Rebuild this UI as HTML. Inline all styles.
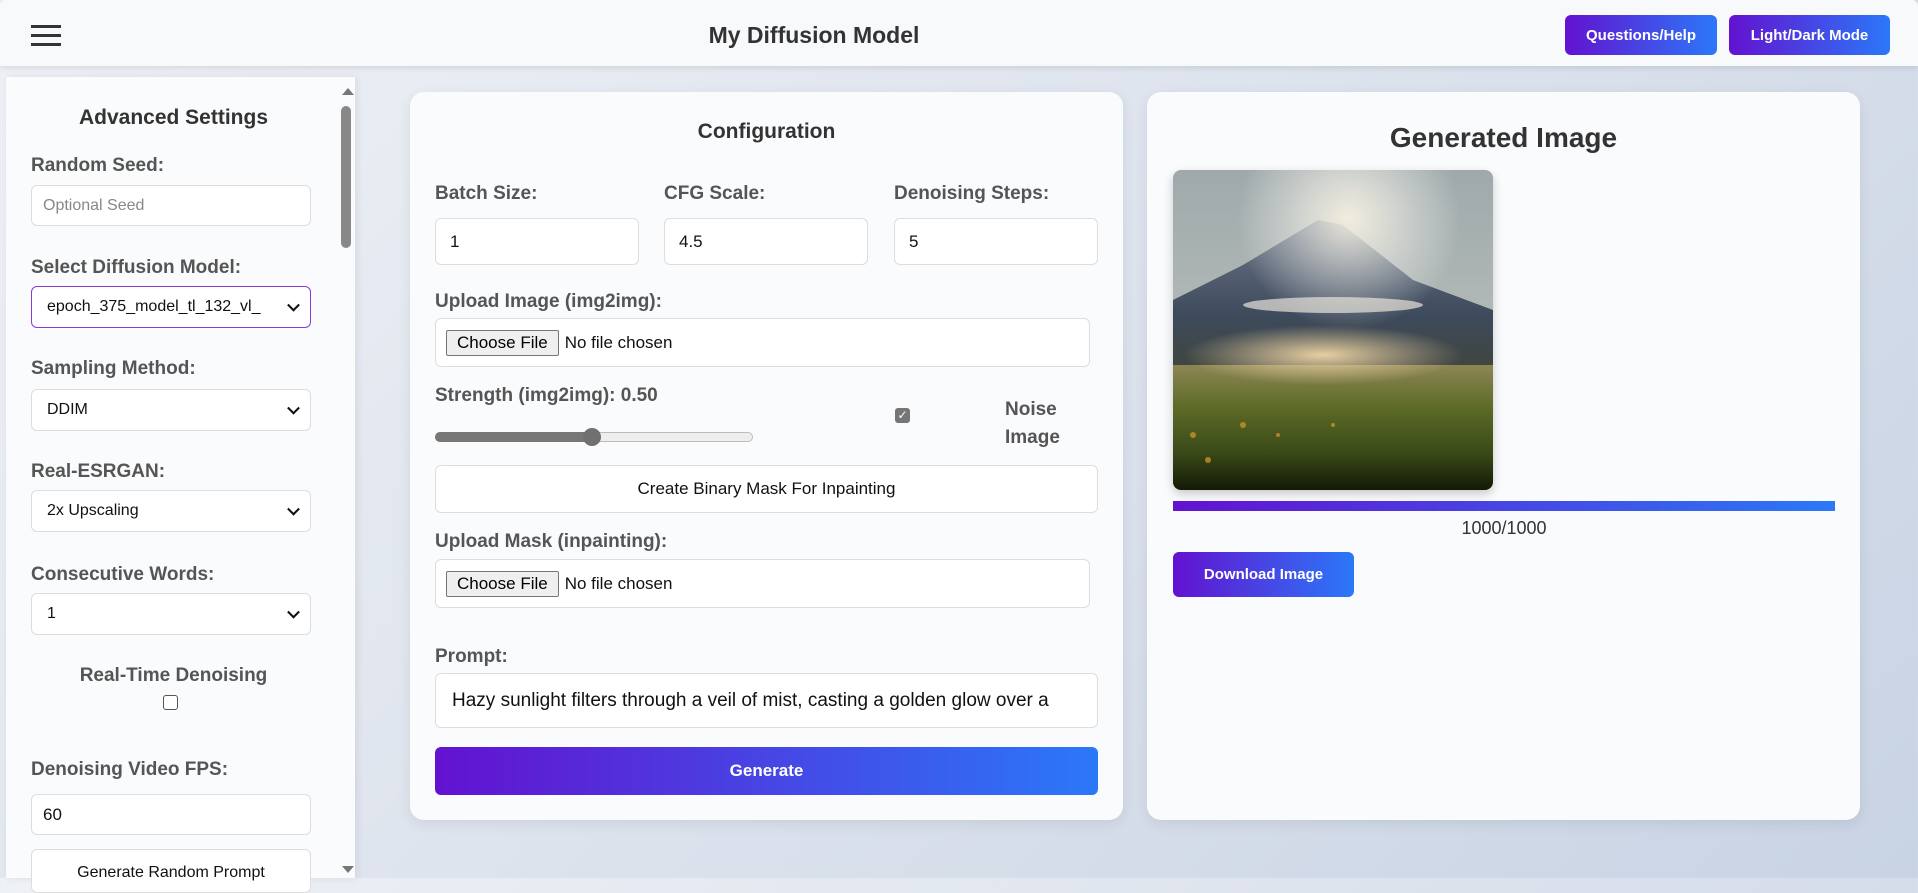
<!DOCTYPE html>
<html><head><meta charset="utf-8"><style>
*{box-sizing:border-box;margin:0;padding:0}
body{width:1918px;height:878px;overflow:hidden;font-family:"Liberation Sans","DejaVu Sans",sans-serif;background:linear-gradient(135deg,#eef1f6 0%,#dde3ed 50%,#c8d3e4 100%);position:relative}
.abs{position:absolute}
.header{left:0;top:0;width:1918px;height:66px;background:#f8f9fb;box-shadow:0 2px 6px rgba(0,0,0,.1);border-radius:6px 6px 0 0}
.ham{left:31px;width:30px;height:3px;background:#333}
.grad{background:linear-gradient(90deg,#6312cf,#2b78f8);color:#fff;font-weight:bold;border-radius:6px;display:flex;align-items:center;justify-content:center}
.side{left:6px;top:77px;width:349px;height:801px;background:#fafbfc;box-shadow:2px 0 8px rgba(0,0,0,.08)}
.lbl{font-size:19px;color:#555;font-weight:600}
.inp{background:#fff;border:1px solid #ddd;border-radius:6px;font-size:17px;color:#111;display:flex;align-items:center;padding-left:14px}
.card{background:#fafbfd;border-radius:14px;box-shadow:0 4px 14px rgba(0,0,0,.08)}
.sel::after{content:"";position:absolute;right:12px;top:50%;width:7px;height:7px;border-right:2px solid #111;border-bottom:2px solid #111;transform:translateY(-70%) rotate(45deg)}
.fbtn{background:#efefef;border:1px solid #767676;border-radius:2px;font-size:17px;padding:2px 10px;margin-right:6px;color:#000}
</style></head><body>
<div class="abs header"></div>
<div class="abs ham" style="top:25px"></div><div class="abs ham" style="top:34px"></div><div class="abs ham" style="top:43px"></div>
<div class="abs" style="left:0;width:1628px;top:22px;text-align:center;font-size:23px;color:#333;font-weight:600">My Diffusion Model</div>
<div class="abs grad" style="left:1565px;top:15px;width:152px;height:40px;font-size:15px">Questions/Help</div>
<div class="abs grad" style="left:1729px;top:15px;width:161px;height:40px;font-size:15px">Light/Dark Mode</div>

<div class="abs side"></div>
<div class="abs" style="left:342px;top:88px;width:0;height:0;border-left:6px solid transparent;border-right:6px solid transparent;border-bottom:7px solid #777"></div>
<div class="abs" style="left:341px;top:106px;width:10px;height:142px;background:#888;border-radius:5px"></div>
<div class="abs" style="left:342px;top:866px;width:0;height:0;border-left:6px solid transparent;border-right:6px solid transparent;border-top:7px solid #777"></div>
<div class="abs" style="left:6px;width:335px;top:106px;text-align:center;font-size:21px;font-weight:bold;color:#333">Advanced Settings</div>
<div class="abs lbl" style="left:31px;top:155px">Random Seed:</div>
<div class="abs inp" style="left:31px;top:185px;width:280px;height:41px;color:#888;font-size:16px;padding-left:11px">Optional Seed</div>
<div class="abs lbl" style="left:31px;top:257px">Select Diffusion Model:</div>
<div class="abs inp sel" style="left:31px;top:286px;width:280px;height:42px;border-color:#8a3ad8;padding-left:15px;font-size:16px">epoch_375_model_tl_132_vl_</div>
<div class="abs lbl" style="left:31px;top:358px">Sampling Method:</div>
<div class="abs inp sel" style="left:31px;top:389px;width:280px;height:42px;padding-left:15px;font-size:16px">DDIM</div>
<div class="abs lbl" style="left:31px;top:461px">Real-ESRGAN:</div>
<div class="abs inp sel" style="left:31px;top:490px;width:280px;height:42px;padding-left:15px;font-size:16px">2x Upscaling</div>
<div class="abs lbl" style="left:31px;top:564px">Consecutive Words:</div>
<div class="abs inp sel" style="left:31px;top:593px;width:280px;height:42px;padding-left:15px;font-size:16px">1</div>
<div class="abs lbl" style="left:6px;width:335px;text-align:center;top:665px">Real-Time Denoising</div>
<div class="abs" style="left:163px;top:695px;width:15px;height:15px;border:1px solid #555;border-radius:3px;background:#fff"></div>
<div class="abs lbl" style="left:31px;top:759px">Denoising Video FPS:</div>
<div class="abs inp" style="left:31px;top:794px;width:280px;height:41px;padding-left:11px">60</div>
<div class="abs inp" style="left:31px;top:849px;width:280px;height:44px;justify-content:center;padding:4px 0 0;font-size:16px">Generate Random Prompt</div>

<div class="abs card" style="left:410px;top:92px;width:713px;height:728px"></div>
<div class="abs" style="left:410px;width:713px;top:120px;text-align:center;font-size:21px;font-weight:bold;color:#333">Configuration</div>
<div class="abs lbl" style="left:435px;top:183px">Batch Size:</div>
<div class="abs lbl" style="left:664px;top:183px">CFG Scale:</div>
<div class="abs lbl" style="left:894px;top:183px">Denoising Steps:</div>
<div class="abs inp" style="left:435px;top:218px;width:204px;height:47px">1</div>
<div class="abs inp" style="left:664px;top:218px;width:204px;height:47px">4.5</div>
<div class="abs inp" style="left:894px;top:218px;width:204px;height:47px">5</div>
<div class="abs lbl" style="left:435px;top:291px">Upload Image (img2img):</div>
<div class="abs inp" style="left:435px;top:318px;width:655px;height:49px;padding-left:10px;font-size:17px"><span class="fbtn">Choose File</span>No file chosen</div>
<div class="abs lbl" style="left:435px;top:385px">Strength (img2img): 0.50</div>
<div class="abs" style="left:435px;top:432px;width:318px;height:10px;border-radius:5px;background:#eee;border:1px solid #bbb"></div>
<div class="abs" style="left:435px;top:432px;width:158px;height:10px;border-radius:5px;background:#777"></div>
<div class="abs" style="left:583px;top:428px;width:18px;height:18px;border-radius:50%;background:#707070"></div>
<div class="abs" style="left:895px;top:408px;width:15px;height:15px;border-radius:3px;background:#767676;color:#fff;font-size:12px;line-height:15px;text-align:center">✓</div>
<div class="abs lbl" style="left:1005px;top:396px;line-height:28px">Noise<br>Image</div>
<div class="abs inp" style="left:435px;top:465px;width:663px;height:48px;justify-content:center;padding:0">Create Binary Mask For Inpainting</div>
<div class="abs lbl" style="left:435px;top:531px">Upload Mask (inpainting):</div>
<div class="abs inp" style="left:435px;top:559px;width:655px;height:49px;padding-left:10px"><span class="fbtn">Choose File</span>No file chosen</div>
<div class="abs lbl" style="left:435px;top:646px">Prompt:</div>
<div class="abs inp" style="left:435px;top:673px;width:663px;height:55px;font-size:19px;padding-left:16px;white-space:nowrap;overflow:hidden">Hazy sunlight filters through a veil of mist, casting a golden glow over a</div>
<div class="abs grad" style="left:435px;top:747px;width:663px;height:48px;font-size:17px">Generate</div>

<div class="abs card" style="left:1147px;top:92px;width:713px;height:728px"></div>
<div class="abs" style="left:1147px;width:713px;top:122px;text-align:center;font-size:28px;font-weight:bold;color:#333">Generated Image</div>
<svg class="abs" style="left:1173px;top:170px;border-radius:8px;box-shadow:0 4px 10px rgba(0,0,0,.2)" width="320" height="320" viewBox="0 0 320 320">
<defs>
<linearGradient id="sky" x1="0" y1="0" x2="0" y2="1"><stop offset="0" stop-color="#9fa9ab"/><stop offset="1" stop-color="#c7cbc4"/></linearGradient>
<linearGradient id="gr" x1="0" y1="0" x2="0" y2="1"><stop offset="0" stop-color="#8d8654"/><stop offset=".35" stop-color="#5b6a26"/><stop offset=".7" stop-color="#3a4a18"/><stop offset="1" stop-color="#121a06"/></linearGradient>
<linearGradient id="mt" x1="0" y1="0" x2="0" y2="1"><stop offset="0" stop-color="#6f7a8a"/><stop offset=".6" stop-color="#3d4a5c"/><stop offset="1" stop-color="#404438"/></linearGradient>
<radialGradient id="sun" cx=".55" cy=".15" r=".35"><stop offset="0" stop-color="#fff8e6" stop-opacity=".85"/><stop offset="1" stop-color="#fff" stop-opacity="0"/></radialGradient>
<radialGradient id="mist" cx=".5" cy=".5" r=".5"><stop offset="0" stop-color="#f0d6a6" stop-opacity=".95"/><stop offset="1" stop-color="#e8cfa2" stop-opacity="0"/></radialGradient>
</defs>
<rect width="320" height="320" fill="url(#sky)"/>
<path d="M0 130 L70 95 L145 50 L170 55 L240 110 L320 140 L320 210 L0 210Z" fill="url(#mt)"/>
<rect width="320" height="320" fill="url(#sun)"/>
<ellipse cx="160" cy="135" rx="90" ry="8" fill="#e8e4da" opacity=".7"/>
<rect y="195" width="320" height="125" fill="url(#gr)"/>
<ellipse cx="150" cy="185" rx="140" ry="30" fill="url(#mist)"/>
<g fill="#c8902a" opacity=".8"><circle cx="20" cy="265" r="3"/><circle cx="70" cy="255" r="3"/><circle cx="35" cy="290" r="3"/><circle cx="105" cy="265" r="2"/><circle cx="160" cy="255" r="2"/></g>
</svg>
<div class="abs" style="left:1173px;top:501px;width:662px;height:10px;background:linear-gradient(90deg,#6312cf,#2b78f8)"></div>
<div class="abs" style="left:1173px;width:662px;top:518px;text-align:center;font-size:18px;color:#333">1000/1000</div>
<div class="abs grad" style="left:1173px;top:552px;width:181px;height:45px;font-size:15px">Download Image</div>
</body></html>
